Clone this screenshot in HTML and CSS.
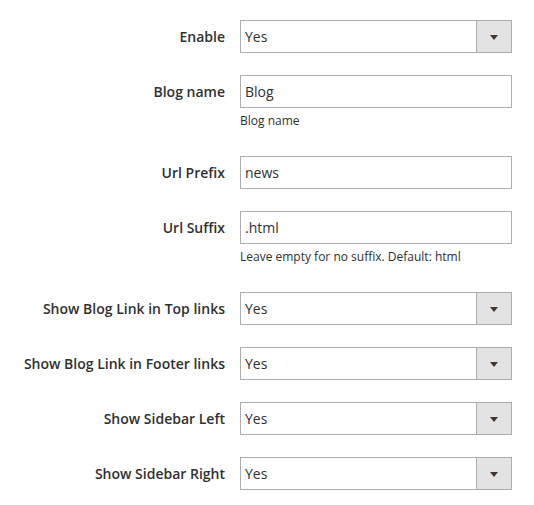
FILE: index.html
```html
<!DOCTYPE html>
<html>
<head>
<meta charset="utf-8">
<link rel="stylesheet" href="styles.css">
</head>
<body>
<div class="form">
  <div class="row">
    <div class="label">Enable</div>
    <div class="control">
      <div class="select"><span class="value">Yes</span><span class="btn"><span class="arrow"></span></span></div>
    </div>
  </div>
  <div class="row">
    <div class="label">Blog name</div>
    <div class="control">
      <div class="input"><span class="value">Blog</span></div>
      <div class="note">Blog name</div>
    </div>
  </div>
  <div class="row">
    <div class="label">Url Prefix</div>
    <div class="control">
      <div class="input"><span class="value">news</span></div>
    </div>
  </div>
  <div class="row">
    <div class="label">Url Suffix</div>
    <div class="control">
      <div class="input"><span class="value">.html</span></div>
      <div class="note">Leave empty for no suffix. Default: html</div>
    </div>
  </div>
  <div class="row">
    <div class="label">Show Blog Link in Top links</div>
    <div class="control">
      <div class="select"><span class="value">Yes</span><span class="btn"><span class="arrow"></span></span></div>
    </div>
  </div>
  <div class="row">
    <div class="label">Show Blog Link in Footer links</div>
    <div class="control">
      <div class="select"><span class="value">Yes</span><span class="btn"><span class="arrow"></span></span></div>
    </div>
  </div>
  <div class="row">
    <div class="label">Show Sidebar Left</div>
    <div class="control">
      <div class="select"><span class="value">Yes</span><span class="btn"><span class="arrow"></span></span></div>
    </div>
  </div>
  <div class="row">
    <div class="label">Show Sidebar Right</div>
    <div class="control">
      <div class="select"><span class="value">Yes</span><span class="btn"><span class="arrow"></span></span></div>
    </div>
  </div>
</div>
</body>
</html>
```
FILE: styles.css
```css
html, body {
  margin: 0;
  padding: 0;
  background: #ffffff;
}
body {
  font-family: "Open Sans", "Noto Sans", sans-serif;
  color: #303030;
}
.form {
  padding-top: 20px;
  display: flex;
  flex-direction: column;
  gap: 22px;
}
.row {
  display: grid;
  grid-template-columns: 225px 272px;
  column-gap: 15px;
  align-items: start;
}
.label {
  text-align: right;
  font-size: 14px;
  font-weight: 600;
  line-height: 33px;
  color: #303030;
}
.control {
  display: flex;
  flex-direction: column;
}
.input, .select {
  box-sizing: border-box;
  height: 33px;
  border: 1px solid #adadad;
  background: #fff;
  display: flex;
  align-items: center;
  font-size: 14px;
}
.value {
  flex: 1;
  padding-left: 4px;
  line-height: 31px;
  color: #303030;
}
.btn {
  box-sizing: border-box;
  width: 35px;
  height: 31px;
  background: #e3e3e3;
  border-left: 1px solid #adadad;
  display: flex;
  align-items: center;
  justify-content: center;
}
.arrow {
  width: 0;
  height: 0;
  border-left: 4px solid transparent;
  border-right: 4px solid transparent;
  border-top: 5px solid #41362f;
  margin-top: 1px;
}
.note {
  font-size: 12px;
  line-height: 18px;
  margin-top: 4px;
  margin-bottom: 4px;
  color: #303030;
}
```
